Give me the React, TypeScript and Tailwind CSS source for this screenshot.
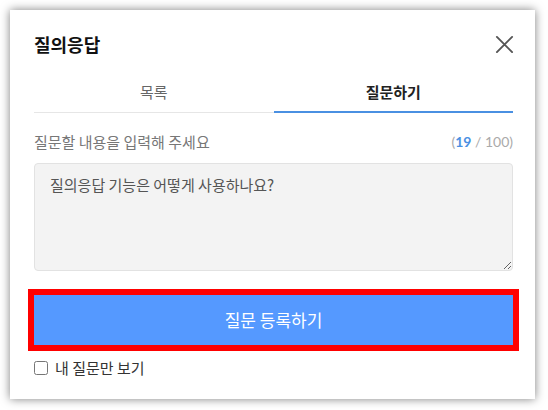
import { useState } from "react";

const kr = "font-['Noto_Sans_CJK_KR','Noto_Sans',sans-serif]";

function CloseIcon() {
  return (
    <svg width="19" height="19" viewBox="0 0 20 20" fill="none">
      <path
        d="M2 2L18 18M18 2L2 18"
        stroke="#555"
        strokeWidth="2"
        strokeLinecap="round"
      />
    </svg>
  );
}

function App() {
  const [text, setText] = useState("질의응답 기능은 어떻게 사용하나요?");
  const [mine, setMine] = useState(false);

  return (
    <div className={`w-[548px] h-[410px] bg-white pt-[10px] pl-[10px] ${kr}`}>
      <div className="w-[525px] h-[389px] bg-white shadow-[0_0_9px_rgba(0,0,0,0.5)] pl-6 pr-[22px] pt-[17px]">
        <div className="flex items-center justify-between">
          <h1 className="text-[18px] font-bold text-[#111] leading-[34px]">질의응답</h1>
          <button className="mr-[-1px]">
            <CloseIcon />
          </button>
        </div>

        <div className="flex mt-[20px]">
          <div className="flex-1 text-center text-[15px] text-[#666] pb-[8px] border-b border-[#e6e6e6]">
            목록
          </div>
          <div className="flex-1 text-center text-[15px] font-bold text-[#222] pb-[7px] border-b-2 border-[#4a90e2]">
            질문하기
          </div>
        </div>

        <div className="flex items-center justify-between mt-[18px]">
          <span className="text-[15px] text-[#777]">질문할 내용을 입력해 주세요</span>
          <span className="text-[14px] text-[#aaa] font-['Lato',sans-serif]">
            (<span className="text-[#4a90e2] font-bold">19</span> / 100)
          </span>
        </div>

        <textarea
          value={text}
          onChange={(e) => setText(e.target.value)}
          className="block w-full h-[108px] mt-[10px] bg-[#f3f3f3] border border-[#e2e2e2] rounded-[4px] px-[15px] py-[10px] text-[15px] text-[#555] outline-none"
        />

        <div className="mt-[18px] -mx-[6px] border-[6px] border-[#ff0000]">
          <button className="w-full h-[50px] bg-[#5599ff] text-white text-[17px]">
            질문 등록하기
          </button>
        </div>

        <label className="flex items-center gap-[7px] mt-[6px] text-[15px] text-[#333]">
          <input
            type="checkbox"
            checked={mine}
            onChange={(e) => setMine(e.target.checked)}
            className="w-[14px] h-[14px] m-0"
          />
          내 질문만 보기
        </label>
      </div>
    </div>
  );
}

export default App;
